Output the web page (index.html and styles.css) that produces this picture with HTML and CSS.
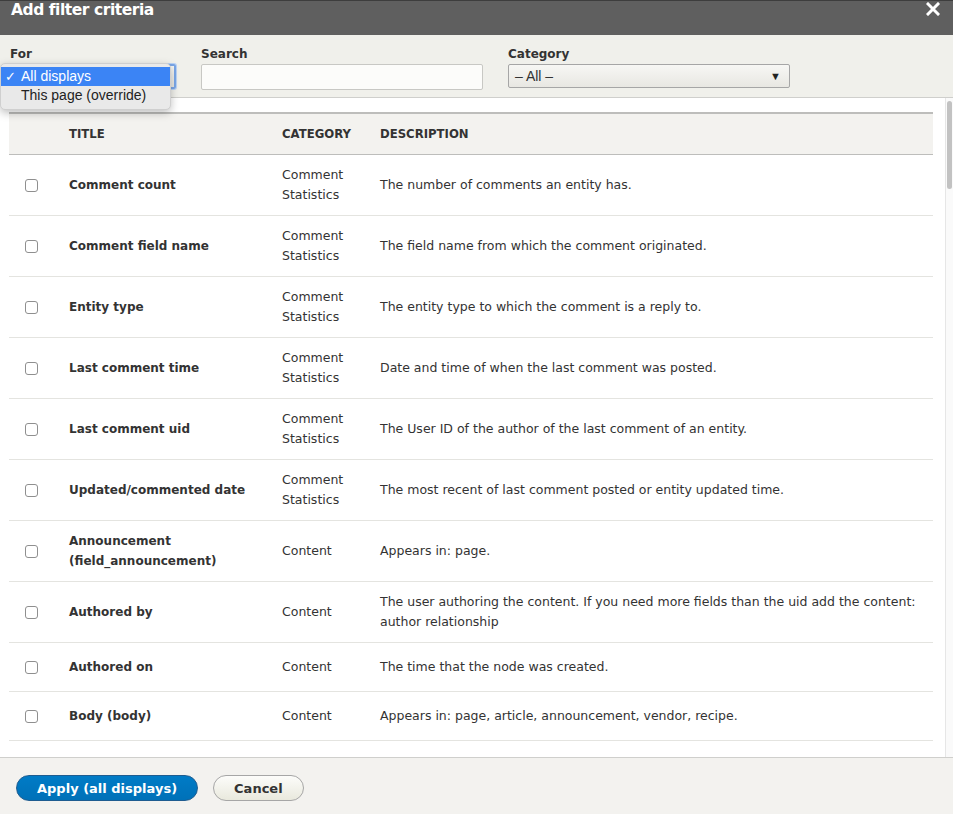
FILE: index.html
```html
<!DOCTYPE html>
<html lang="en">
<head>
<meta charset="utf-8">
<title>Add filter criteria</title>
<link rel="stylesheet" href="styles.css">
</head>
<body>
<div class="dialog">
  <div class="titlebar">
    <span class="title">Add filter criteria</span>
    <svg class="close" width="14" height="14" viewBox="0 0 14 14"><path d="M2 2 L12 12 M12 2 L2 12" stroke="#fff" stroke-width="3" stroke-linecap="square"/></svg>
  </div>
  <div class="filters">
    <div class="field field-for">
      <label class="lbl">For</label>
      <div class="select focus"></div>
      <div class="menu">
        <div class="opt sel"><span class="check">✓</span>All displays</div>
        <div class="opt">This page (override)</div>
      </div>
    </div>
    <div class="field field-search">
      <label class="lbl">Search</label>
      <div class="input"></div>
    </div>
    <div class="field field-cat">
      <label class="lbl">Category</label>
      <div class="select cat"><span>– All –</span><span class="arrow">▼</span></div>
    </div>
  </div>
  <div class="content">
    <div class="scroll">
      <table class="tbl">
        <thead>
          <tr><th class="c-chk"></th><th class="c-title">Title</th><th class="c-cat">Category</th><th class="c-desc">Description</th></tr>
        </thead>
        <tbody>
          <tr><td class="c-chk"><span class="cb"></span></td><td class="c-title">Comment count</td><td>Comment Statistics</td><td>The number of comments an entity has.</td></tr>
          <tr><td class="c-chk"><span class="cb"></span></td><td class="c-title">Comment field name</td><td>Comment Statistics</td><td>The field name from which the comment originated.</td></tr>
          <tr><td class="c-chk"><span class="cb"></span></td><td class="c-title">Entity type</td><td>Comment Statistics</td><td>The entity type to which the comment is a reply to.</td></tr>
          <tr><td class="c-chk"><span class="cb"></span></td><td class="c-title">Last comment time</td><td>Comment Statistics</td><td>Date and time of when the last comment was posted.</td></tr>
          <tr><td class="c-chk"><span class="cb"></span></td><td class="c-title">Last comment uid</td><td>Comment Statistics</td><td>The User ID of the author of the last comment of an entity.</td></tr>
          <tr><td class="c-chk"><span class="cb"></span></td><td class="c-title">Updated/commented date</td><td>Comment Statistics</td><td>The most recent of last comment posted or entity updated time.</td></tr>
          <tr><td class="c-chk"><span class="cb"></span></td><td class="c-title">Announcement (field_announcement)</td><td>Content</td><td>Appears in: page.</td></tr>
          <tr><td class="c-chk"><span class="cb"></span></td><td class="c-title">Authored by</td><td>Content</td><td>The user authoring the content. If you need more fields than the uid add the content: author relationship</td></tr>
          <tr><td class="c-chk"><span class="cb"></span></td><td class="c-title">Authored on</td><td>Content</td><td>The time that the node was created.</td></tr>
          <tr><td class="c-chk"><span class="cb"></span></td><td class="c-title">Body (body)</td><td>Content</td><td>Appears in: page, article, announcement, vendor, recipe.</td></tr>
          <tr class="partial"><td class="c-chk"></td><td></td><td></td><td></td></tr>
        </tbody>
      </table>
    </div>
    <div class="scrollbar"><div class="thumb"></div></div>
  </div>
  <div class="footer">
    <button class="btn primary">Apply (all displays)</button>
    <button class="btn">Cancel</button>
  </div>
</div>
</body>
</html>
```

FILE: styles.css
```css
html, body {
  margin: 0;
  padding: 0;
  height: 100%;
  overflow: hidden;
}
body {
  font-family: "DejaVu Sans", "Lucida Grande", sans-serif;
  font-size: 12px;
  color: #333;
  background: #fff;
}
.dialog {
  display: flex;
  flex-direction: column;
  height: 814px;
}
.titlebar {
  height: 34px;
  border-top: 1px solid #3d3d3d;
  background: #5f5f5f;
  display: flex;
  justify-content: space-between;
  align-items: flex-start;
  padding: 0 13px 0 11px;
  flex: none;
}
.title {
  color: #fff;
  font-weight: bold;
  font-size: 15.5px;
  letter-spacing: -0.45px;
  line-height: 18px;
}
.close {
  margin-top: 1px;
}
.filters {
  flex: none;
  background: #f0f0eb;
  border-bottom: 1px solid #cfcfcc;
  display: flex;
  box-sizing: border-box;
  height: 63px;
}
.field {
  display: flex;
  flex-direction: column;
  padding-top: 12px;
  position: relative;
}
.field-for { margin-left: 10px; width: 166px; }
.field-search { margin-left: 25px; width: 282px; }
.field-cat { margin-left: 25px; width: 282px; }
.lbl {
  font-weight: bold;
  font-size: 12px;
  line-height: 15px;
  color: #333;
  margin-bottom: 2px;
}
.select {
  height: 24px;
  box-sizing: border-box;
  border: 1px solid #a6a6a6;
  border-radius: 2px;
  background: linear-gradient(#f7f7f4, #e8e7e2);
}
.select.focus {
  border: 2px solid #7aa7e8;
  box-shadow: 0 0 0 1px #b9d2f5;
  height: 25px;
}
.select.cat {
  display: flex;
  justify-content: space-between;
  align-items: center;
  padding: 0 8px 0 6px;
  height: 24px;
  font-family: "Liberation Sans", "Helvetica", sans-serif;
  font-size: 14px;
  color: #333;
}
.arrow {
  font-size: 11px;
  color: #222;
}
.input {
  height: 26px;
  box-sizing: border-box;
  border: 1px solid #c8c8c4;
  border-radius: 2px;
  background: #fcfcfa;
}
.menu {
  position: absolute;
  left: -10px;
  top: 28px;
  width: 171px;
  box-sizing: border-box;
  padding: 3px 0 4px;
  background: #e9e9e9;
  border: 1px solid #cfcfcf;
  border-radius: 5px;
  box-shadow: 0 3px 8px rgba(0,0,0,0.25);
  font-family: "Liberation Sans", "Helvetica", sans-serif;
  font-size: 14px;
  color: #222;
  z-index: 5;
}
.opt {
  height: 19px;
  line-height: 19px;
  padding-left: 20px;
  position: relative;
}
.opt.sel {
  background: #3b84f5;
  color: #fff;
}
.check {
  position: absolute;
  left: 4px;
  font-size: 13px;
}
.content {
  flex: 1;
  display: flex;
  min-height: 0;
  overflow: hidden;
}
.scroll {
  flex: 1;
  padding: 14px 13px 0 9px;
  overflow: hidden;
}
.scrollbar {
  flex: none;
  width: 7px;
  border-left: 1px solid #e6e6e6;
  background: #fafafa;
  padding-top: 3px;
}
.thumb {
  width: 5px;
  margin-left: 1px;
  height: 88px;
  border-radius: 3px;
  background: #c2c2c2;
}
.tbl {
  width: 924px;
  border-collapse: collapse;
  table-layout: fixed;
}
.tbl th {
  background: #f3f2ef;
  border-top: 2px solid #bdbdbb;
  border-bottom: 1px solid #bdbdbb;
  text-transform: uppercase;
  font-weight: bold;
  font-size: 11.7px;
  text-align: left;
  padding: 0 12px;
  height: 40px;
  color: #333;
}
.tbl td {
  padding: 10px 12px;
  line-height: 20px;
  vertical-align: middle;
  border-bottom: 1px solid #e4e4e0;
  color: #333;
  font-size: 12.5px;
}
.tbl .c-chk { width: 32px; padding: 10px 0 10px 16px; height: 28px; }
.tbl th.c-chk { padding: 0 0 0 16px; }
.tbl .c-title { width: 189px; }
.tbl .c-cat { width: 74px; }
.tbl td.c-title { font-weight: bold; font-size: 12px; }
.cb {
  display: block;
  width: 11px;
  height: 11px;
  border: 1px solid #8f8f8f;
  border-radius: 3px;
  background: #fff;
}
.partial td { height: 20px; border-bottom: none; }
.footer {
  flex: none;
  border-top: 1px solid #cfcfcc;
  background: #f3f2ef;
  display: flex;
  align-items: flex-start;
  padding: 17px 0 0 16px;
  box-sizing: border-box;
  height: 57px;
  gap: 15px;
}
.btn {
  height: 26px;
  border-radius: 13px;
  border: 1px solid #a6a6a6;
  background: linear-gradient(#fcfcfa, #e9e9dd);
  font-family: "DejaVu Sans", sans-serif;
  font-weight: bold;
  font-size: 13px;
  color: #333;
  padding: 0 20px;
}
.btn.primary {
  background: linear-gradient(#007bc6, #0071b8);
  border-color: #1e5c90;
  color: #fff;
  padding: 0 20px;
}
```
